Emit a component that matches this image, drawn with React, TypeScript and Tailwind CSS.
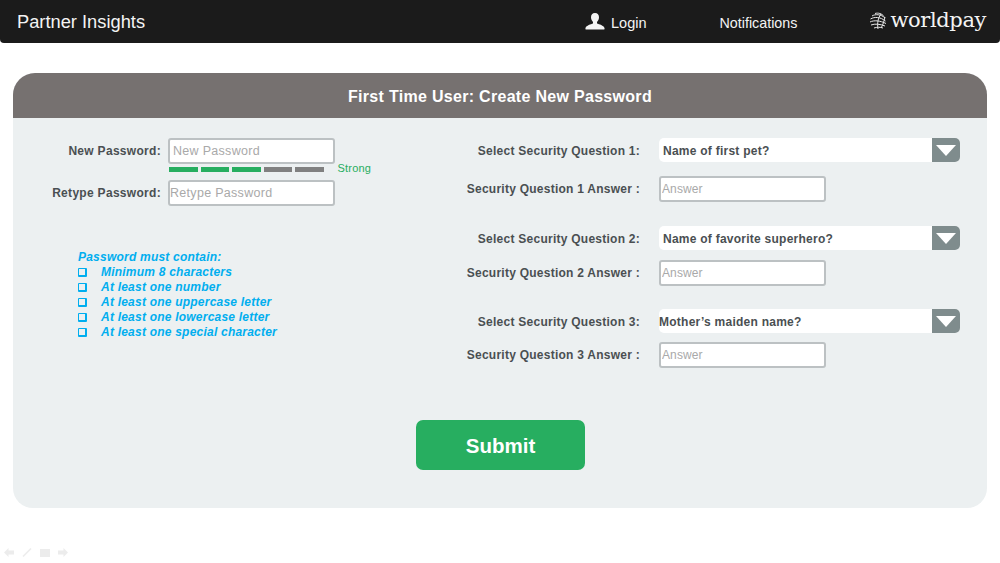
const rules = [
  "Minimum 8 characters",
  "At least one number",
  "At least one uppercase letter",
  "At least one lowercase letter",
  "At least one special character",
];

const questions = [
  { select: "Select Security Question 1:", answerLabel: "Security Question 1 Answer :", value: "Name of first pet?", valueClass: "pl-[4px]", rowClass: "mt-0", gapClass: "mt-[14px]" },
  { select: "Select Security Question 2:", answerLabel: "Security Question 2 Answer :", value: "Name of favorite superhero?", valueClass: "pl-[4px]", rowClass: "mt-[24px]", gapClass: "mt-[10px]" },
  { select: "Select Security Question 3:", answerLabel: "Security Question 3 Answer :", value: "Mother’s maiden name?", valueClass: "pl-0", rowClass: "mt-[23px]", gapClass: "mt-[9px]" },
];

function UserIcon() {
  return (
    <svg width="20" height="17" viewBox="0 0 20 17" fill="#f4f4f4">
      <path d="M10 0c2.700 0 4 1.900 4 4.300 0 2-1 3.700-2 4.700v1.500c2 .8 6.800 2 7.500 4.500.2.800 0 1.500-.5 1.500H1c-.5 0-.7-.7-.5-1.500C1.200 12.500 6 11.300 8 10.500V9C7 8 6 6.300 6 4.300 6 1.900 7.300 0 10 0z" />
    </svg>
  );
}

function Globe() {
  return (
    <svg width="18" height="18" viewBox="0 0 18 18" fill="none" stroke="#e8e8e8" strokeWidth="1">
      <path d="M6 1.500c3-1 7 0 9 3" />
      <path d="M3 4c3-2 9-2 13 2" />
      <path d="M1.500 7c4-2.500 10-2 15 2" />
      <path d="M1 10c4-2 10-1.500 16 1.500" />
      <path d="M2 13c4-1.500 9-1 14 1" />
      <path d="M5 16c3-1 6-1 9 0" />
      <path d="M12 2c-3 4-4 9-3 15" />
      <path d="M16 5c-1 4-2 8-4 11" />
    </svg>
  );
}

function TextInput({ placeholder, className }: { placeholder: string; className: string }) {
  return (
    <input
      placeholder={placeholder}
      readOnly
      className={`h-[26px] rounded-[3px] border-2 border-[#bcc1c3] bg-white font-normal outline-none placeholder:text-[#a9a9a9] ${className}`}
    />
  );
}

function Meter() {
  return (
    <div className="mt-[3px] ml-[156px] flex h-[5px] items-center">
      <div className="flex gap-[3px]">
        <span className="h-[5px] w-[28.500px] bg-[#27ae60]" />
        <span className="h-[5px] w-[28.500px] bg-[#27ae60]" />
        <span className="h-[5px] w-[28.500px] bg-[#27ae60]" />
        <span className="h-[5px] w-[28.500px] bg-[#808080]" />
        <span className="h-[5px] w-[28.500px] bg-[#808080]" />
      </div>
      <span className="-mt-[2px] ml-[14px] text-[11px] leading-[5px] tracking-[0.2px] text-[#27ae60]">Strong</span>
    </div>
  );
}

function SelectBox({ value, valueClass }: { value: string; valueClass: string }) {
  return (
    <div className="flex h-6 w-[301px] items-center justify-between rounded-[5px] bg-white">
      <span className={`pt-[2px] text-[12px] font-bold tracking-[0.25px] text-[#4a4f52] ${valueClass}`}>{value}</span>
      <span className="flex h-6 w-[28px] items-center justify-center rounded-tr-[5px] rounded-br-[5px] bg-[#7f8c8d]">
        <svg width="20" height="11" viewBox="0 0 20 11" fill="#ffffff">
          <path d="M0 0h20L10 11z" />
        </svg>
      </span>
    </div>
  );
}

export default function App() {
  return (
    <div className="h-[563px] w-[1000px] overflow-hidden bg-white font-['Liberation_Sans',Arial,sans-serif]">
      <header className="flex h-[43px] items-center rounded-b-[4px] bg-[#1b1b1b] text-[#f4f4f4]">
        <div className="mt-[1px] ml-[17px] w-[128px] text-[18.300px] whitespace-nowrap">Partner Insights</div>
        <div className="ml-[440px] flex items-center">
          <UserIcon />
          <span className="mt-[5px] ml-[6px] text-[14.500px]">Login</span>
        </div>
        <span className="mt-[5px] ml-[73px] text-[14.300px]">Notifications</span>
        <div className="mr-[14px] mb-[2px] ml-auto flex items-center gap-[4px]">
          <Globe />
          <span className="font-['DejaVu_Serif',serif] text-[21px] leading-none tracking-[-0.4px]">worldpay</span>
        </div>
      </header>

      <main className="mx-[13px] mt-[30px] h-[435px] rounded-t-[22px] rounded-b-[20px] bg-[#ecf0f1]">
        <h1 className="flex h-[45px] items-center justify-center rounded-t-[22px] bg-[#767170] pt-[2px] text-[16px] font-bold tracking-[0.3px] text-white">
          First Time User: Create New Password
        </h1>

        <div className="flex pt-5">
          <section className="w-[427px]">
            <div className="flex items-center text-[12px] font-bold tracking-[0.3px] text-[#4a4f52]">
              <label className="w-[148px] text-right">New Password:</label>
              <TextInput placeholder="New Password" className="ml-[7px] w-[167px] pl-[3px] text-[12.500px]" />
            </div>
            <Meter />
            <div className="mt-[8px] flex items-center text-[12px] font-bold tracking-[0.3px] text-[#4a4f52]">
              <label className="w-[148px] text-right">Retype Password:</label>
              <TextInput placeholder="Retype Password" className="ml-[7px] w-[167px] text-[12.500px]" />
            </div>

            <div className="mt-[44px] ml-[65px] text-[12px] leading-[15px] font-bold tracking-[0.22px] text-[#00aeef] italic">
              <p>Password must contain:</p>
              {rules.map((rule) => (
                <div key={rule} className="flex items-center">
                  <span className="h-[9px] w-[9px] rounded-[1px] border-t border-r-2 border-b-2 border-l border-[#00aeef]" />
                  <span className="ml-[14px]">{rule}</span>
                </div>
              ))}
            </div>
          </section>

          <section className="flex-1">
            {questions.map((q) => (
              <div key={q.select} className={q.rowClass}>
                <div className="flex items-center">
                  <label className="w-[200px] pt-[2px] text-right text-[12px] font-bold tracking-[0.25px] text-[#4a4f52]">{q.select}</label>
                  <div className="ml-[19px]">
                    <SelectBox value={q.value} valueClass={q.valueClass} />
                  </div>
                </div>
                <div className={`flex items-center ${q.gapClass}`}>
                  <label className="w-[200px] text-right text-[12px] font-bold tracking-[0.25px] text-[#4a4f52]">{q.answerLabel}</label>
                  <TextInput placeholder="Answer" className="ml-[19px] w-[167px] pl-[1px] text-[12px] tracking-[0.1px]" />
                </div>
              </div>
            ))}
          </section>
        </div>

        <div className="mt-[52px] flex justify-center">
          <button className="ml-[1px] h-[50px] w-[169px] rounded-[7px] bg-[#27ae60] pt-[2px] text-[20.500px] font-bold text-white">
            Submit
          </button>
        </div>
      </main>

      <nav className="mt-[40px] ml-[4px] flex items-center gap-[8px] opacity-80">
        <svg width="10" height="9" viewBox="0 0 10 9" fill="#e8e8e8"><path d="M0 4.500 4.500 0v2.500H10v4H4.500V9z" /></svg>
        <svg width="10" height="9" viewBox="0 0 10 9" stroke="#e8e8e8" strokeWidth="1.500" fill="none"><path d="M1 8.500 9 .5" /></svg>
        <svg width="10" height="8" viewBox="0 0 10 8" fill="#e8e8e8"><path d="M0 0h10v8H0z" /></svg>
        <svg width="10" height="9" viewBox="0 0 10 9" fill="#e8e8e8"><path d="M10 4.500 5.500 0v2.500H0v4h5.500V9z" /></svg>
      </nav>
    </div>
  );
}
